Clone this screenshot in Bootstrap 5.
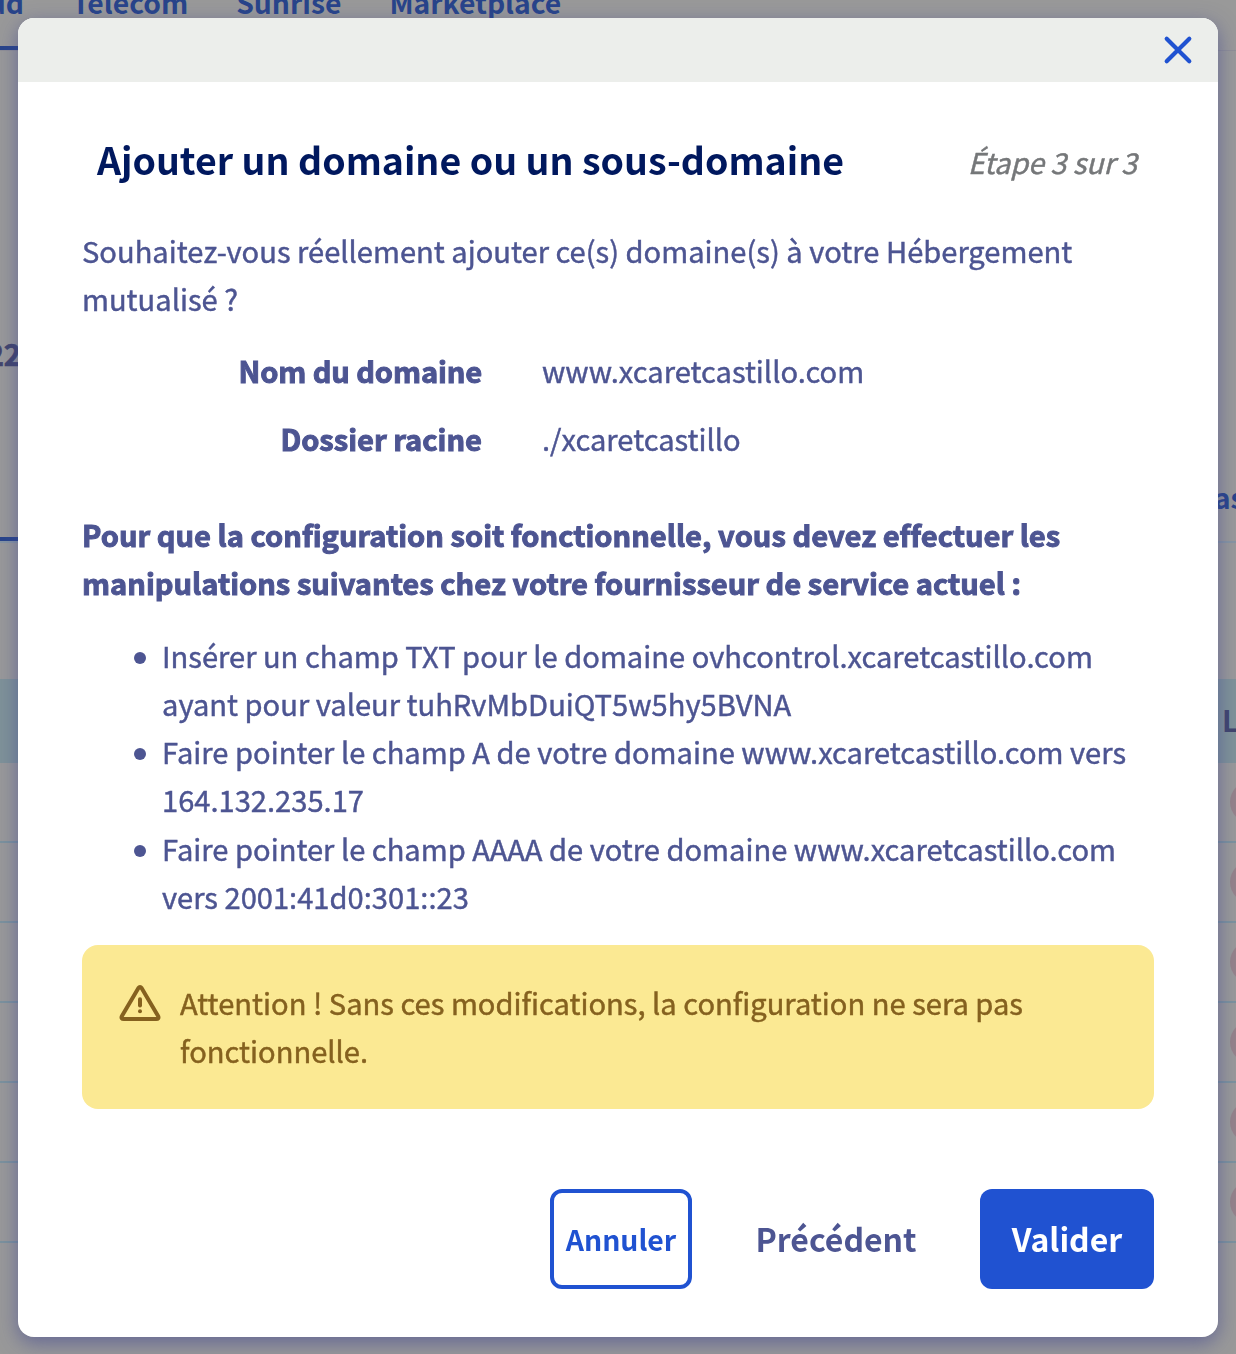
<!DOCTYPE html>
<html lang="fr">
<head>
<meta charset="utf-8">
<meta name="viewport" content="width=device-width, initial-scale=1">
<title>Ajouter un domaine</title>
<link href="https://cdn.jsdelivr.net/npm/bootstrap@5.3.0/dist/css/bootstrap.min.css" rel="stylesheet">
<style>
  :root { --blue:#2052d1; --slate:#4d5592; --dim-blue:#28448a; --dim-line:#7c929d; }
  body { font-family:"Noto Sans CJK SC","Noto Sans",sans-serif; font-size:29.12px; line-height:48px; color:var(--slate); background:#999; overflow:hidden; font-variant-ligatures:none; }
  .backpage { height:1354px; overflow:hidden; }
  .topnav { height:51px; border-bottom:1px solid #8f8f96; gap:48px; color:var(--dim-blue); font-weight:700; font-size:28.3px; line-height:36px; }
  .topnav span { margin-top:-16px; height:66px; }
  .topnav .current { width:24px; direction:rtl; border-bottom:4px solid var(--dim-blue); white-space:nowrap; }
  .service-head { height:492px; }
  .service-id { padding-top:278px; width:21px; direction:rtl; color:#40446c; font-weight:700; white-space:nowrap; -webkit-text-stroke:.7px currentColor; }
  .service-tabs { border-bottom:2px solid #8795a2; }
  .tab-on { width:40px; height:490px; border-bottom:4px solid var(--dim-blue); }
  .tab-right { width:22px; padding-top:422px; color:var(--dim-blue); font-weight:700; font-size:28px; overflow:hidden; white-space:nowrap; }
  .thead-band { margin-top:136px; height:84px; background:#7f9298; color:#40446c; font-weight:700; }
  .thead-band span { width:14px; overflow:hidden; line-height:80px; }
  .trow { height:80px; border-bottom:2px solid var(--dim-line); overflow:hidden; }
  .dot { width:42px; height:42px; border-radius:50%; background:#96838a; margin-right:-36px; flex:none; }
  .modal-dialog { max-width:1200px; margin:18px; }
  .modal-content { height:1319px; border:0; border-radius:16px; overflow:hidden; color:var(--slate); -webkit-text-stroke:.45px currentColor; }
  .modal-shadow { border-radius:16px; box-shadow:0 6px 20px rgba(65,70,145,.6); }
  .modal-header { height:64px; background:#eceeeb; border:0; border-radius:0; padding:0 24px; }
  .closer { background:none; border:0; padding:0; width:32px; height:32px; line-height:0; }
  .modal-body { padding:47px 64px 0; }
  .modal-title { font-size:37.5px; font-weight:700; line-height:60px; color:#00185e; white-space:nowrap; -webkit-text-stroke:0; margin-left:-1px; }
  .step { color:#757779; font-style:italic; font-size:28.7px; padding-top:6px; margin-right:1px; }
  .intro { margin:37px 0 24px; }
  .pairs dt { width:400px; text-align:right; }
  .pairs > div:first-child dt { letter-spacing:-.13px; }
  .pairs dd { margin:0 0 0 60px; }
  .pairs > div { margin-bottom:20px; }
  .pairs dt, .todo { -webkit-text-stroke:1px currentColor; }
  .todo { margin:48px 0 25px; font-weight:700; }
  .steps { margin:0 0 25px; padding-left:80px; list-style:none; }
  .steps li { display:flex; }
  .steps li::before { content:""; flex:none; width:12px; height:12px; margin:21px 16px 0 -28px; border-radius:50%; background:var(--slate); }
  .steps li:last-child { margin-top:1px; }
  .warnbox { background:#fbe993; color:#85611f; border:0; border-radius:16px; height:164px; padding:33px 36px; margin:0; }
  .warnbox svg { margin:6px 18px 0 0; flex:none; }
  .modal-footer { border:0; padding:0 64px 48px; }
  .modal-footer > * { margin:0; }
  .modal-footer .btn { height:100px; border-radius:12px; font-weight:700; padding:0; white-space:nowrap; -webkit-text-stroke:0; }
  .modal-footer .btn-cancel { width:142px; border:4px solid var(--blue); color:var(--blue); font-size:28.4px; }
  .modal-footer .btn-back { width:288px; color:var(--slate); font-size:32px; border:0; padding-bottom:2px; }
  .modal-footer .btn-ok { width:174px; background:var(--blue); color:#fff; font-size:32px; border:0; padding-bottom:2px; }
</style>
</head>
<body>
<main class="backpage">
  <nav class="topnav d-flex">
    <span class="current">Cloud</span><span>Telecom</span><span>Sunrise</span><span>Marketplace</span>
  </nav>
  <section class="service-head service-tabs d-flex">
    <div class="tab-on"><div class="service-id">22</div></div>
    <div class="tab-right ms-auto">as</div>
  </section>
  <section>
    <div class="thead-band d-flex justify-content-end"><span>L</span></div>
    <div class="trow d-flex align-items-center justify-content-end"><div class="dot"></div></div>
    <div class="trow d-flex align-items-center justify-content-end"><div class="dot"></div></div>
    <div class="trow d-flex align-items-center justify-content-end"><div class="dot"></div></div>
    <div class="trow d-flex align-items-center justify-content-end"><div class="dot"></div></div>
    <div class="trow d-flex align-items-center justify-content-end"><div class="dot"></div></div>
    <div class="trow d-flex align-items-center justify-content-end"><div class="dot"></div></div>
  </section>
</main>

<div class="modal d-block overflow-hidden" role="dialog" aria-modal="true">
  <div class="modal-dialog">
    <div class="modal-shadow w-100">
    <div class="modal-content">
      <div class="modal-header justify-content-end">
        <button class="closer" type="button" aria-label="Fermer">
          <svg width="32" height="32" viewBox="0 0 32 32" fill="none" stroke="#2052d1" stroke-width="4.2" stroke-linecap="round"><path d="M4.7 4.7 27.3 27.3M27.3 4.7 4.7 27.3"/></svg>
        </button>
      </div>
      <div class="modal-body">
        <div class="d-flex justify-content-between align-items-center px-3">
          <h1 class="modal-title">Ajouter un domaine ou un sous-domaine</h1>
          <span class="step">Étape 3 sur 3</span>
        </div>
        <p class="intro">Souhaitez-vous réellement ajouter ce(s) domaine(s) à votre Hébergement mutualisé ?</p>
        <dl class="pairs m-0">
          <div class="d-flex"><dt>Nom du domaine</dt><dd>www.xcaretcastillo.com</dd></div>
          <div class="d-flex"><dt>Dossier racine</dt><dd>./xcaretcastillo</dd></div>
        </dl>
        <p class="todo">Pour que la configuration soit fonctionnelle, vous devez effectuer les manipulations suivantes chez votre fournisseur de service actuel :</p>
        <ul class="steps">
          <li>Insérer un champ TXT pour le domaine ovhcontrol.xcaretcastillo.com ayant pour valeur tuhRvMbDuiQT5w5hy5BVNA</li>
          <li>Faire pointer le champ A de votre domaine www.xcaretcastillo.com vers 164.132.235.17</li>
          <li>Faire pointer le champ AAAA de votre domaine www.xcaretcastillo.com vers 2001:41d0:301::23</li>
        </ul>
        <div class="alert warnbox d-flex align-items-start" role="alert">
          <svg width="44" height="40" viewBox="0 0 44 40" fill="none" stroke="#85611f" stroke-width="4" stroke-linejoin="round" stroke-linecap="round"><path d="M20.3 4.2Q22 1.6 23.7 4.2L40.2 32.2Q41.3 35 38.2 35H5.8Q2.7 35 3.8 32.2Z"/><path d="M22 15.3V21.5"/><path d="M22 27.2v.1"/></svg>
          <div>Attention ! Sans ces modifications, la configuration ne sera pas fonctionnelle.</div>
        </div>
      </div>
      <div class="modal-footer justify-content-end">
        <button class="btn btn-cancel" type="button">Annuler</button>
        <button class="btn btn-back" type="button">Précédent</button>
        <button class="btn btn-ok" type="button">Valider</button>
      </div>
    </div>
    </div>
  </div>
</div>
<script src="https://cdn.jsdelivr.net/npm/bootstrap@5.3.0/dist/js/bootstrap.bundle.min.js"></script>
</body>
</html>
